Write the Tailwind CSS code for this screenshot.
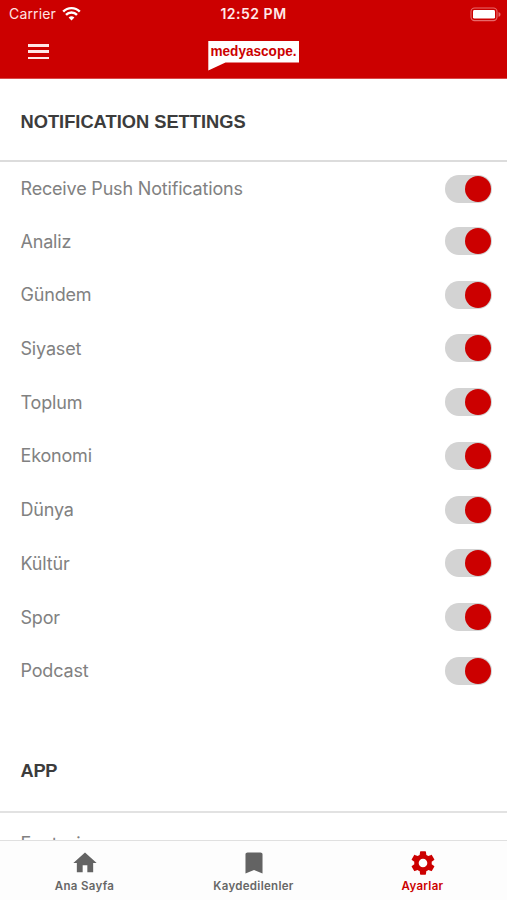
<!DOCTYPE html>
<html lang="tr">
<head>
  <meta charset="UTF-8" />
  <meta name="viewport" content="width=device-width, initial-scale=1.0" />
  <title>Medyascope - Ayarlar</title>
  <script src="https://cdn.jsdelivr.net/npm/@tailwindcss/browser@4"></script>
</head>
<body class="bg-white font-['Inter',sans-serif]">
  <div class="w-[507px] h-[900px] flex flex-col overflow-hidden">

    <header class="h-[79px] shrink-0 bg-[#cc0000] text-white border-b border-[#d94a4a]">
      <!-- Status bar -->
      <div class="h-[27px] grid grid-cols-3 items-center px-[9px]">
        <div class="flex items-center gap-[6px] text-[#ffe3e3]">
          <span class="text-[14px] leading-[26px] tracking-[0.15px]">Carrier</span>
          <svg class="w-[19px] h-[15px] -mt-[2px]" viewBox="0 0 19 15" fill="none" stroke="#fff" stroke-width="2.4">
            <path d="M1.2 5.6a11.6 11.6 0 0 1 16.6 0" />
            <path d="M4 8.9a7.6 7.6 0 0 1 11 0" />
            <path d="M9.5 14.6 6.6 11.6a4.1 4.1 0 0 1 5.8 0z" fill="#fff" stroke="none" />
          </svg>
        </div>
        <span class="text-center text-[14px] leading-[28px] font-semibold tracking-[0.5px] text-[#ffe9e9]">12:52 PM</span>
        <svg class="justify-self-end -mr-[3px] w-[31px] h-[15px]" viewBox="0 0 31 15">
          <rect x="1" y="1" width="26" height="12.6" rx="3.6" fill="none" stroke="#e86a6a" stroke-width="1.1" />
          <rect x="3" y="3" width="22" height="8.6" rx="1.4" fill="#fff" />
          <path d="M28.5 5v4.8c1.2-.4 2-1.3 2-2.4s-.8-2-2-2.4z" fill="#e86a6a" />
        </svg>
      </div>
      <!-- Nav bar -->
      <div class="h-[51px] grid grid-cols-3 items-start px-[28px]">
        <button class="mt-[17px] w-[21px] h-[15px] flex flex-col justify-between" aria-label="Menu">
          <span class="block w-full h-[2.5px] bg-[#ffe6e6]"></span>
          <span class="block w-full h-[2.5px] bg-[#ffe6e6]"></span>
          <span class="block w-full h-[2.5px] bg-[#ffe6e6]"></span>
        </button>
        <svg class="justify-self-center mt-[13px] w-[92px] h-[32px]" viewBox="0 0 92 32">
          <path d="M1.3 1h91v21.5h-73.8L1.3 30.6z" fill="#fff" />
          <text x="3.5" y="15.5" font-family="Liberation Sans, sans-serif" font-weight="700" font-size="14" textLength="86" lengthAdjust="spacingAndGlyphs" fill="#cc0000">medyascope.</text>
        </svg>
      </div>
    </header>

    <main class="flex-1 min-h-0 overflow-hidden text-[18px] text-[#818181]">
      <h2 class="h-[83px] pt-[4.8px] pl-[20.5px] flex items-center border-b-2 border-[#dcdcdc] font-['Liberation_Sans',sans-serif] font-bold text-[18.3px] text-[#3c3c3c]">NOTIFICATION SETTINGS</h2>

      <ul id="settings">
        <li class="h-[52.2px] pt-[1px] pl-[20.5px] pr-[15px] flex items-center justify-between">
          <span class="tracking-[-0.18px]">Receive Push Notifications</span>
          <span class="w-[47px] h-[28px] rounded-full bg-[#d3d3d3] flex items-center justify-end pr-[1px]"><span class="size-[26px] rounded-full bg-[#cc0000]"></span></span>
        </li>
      </ul>

      <h2 class="mt-[34.3px] h-[81px] pl-[20.5px] flex items-center border-b-2 border-[#e2e2e2] font-['Liberation_Sans',sans-serif] font-bold text-[18.2px] tracking-[-0.2px] text-[#3c3c3c]">APP</h2>
      <div class="h-[54px] pl-[20.5px] pt-[17px] leading-[27px] [word-spacing:4px]">Font size</div>
    </main>

    <!-- Tab bar -->
    <nav class="h-[60px] shrink-0 grid grid-cols-3 bg-[#fdfdfd] border-t border-[#e0e0e0] text-[11.5px] leading-[14px] font-semibold tracking-[0.3px] text-[#676767]">
      <a class="flex flex-col items-center pt-[8px]">
        <svg class="w-[28px] h-[28px]" viewBox="0 0 24 24" fill="#636363"><path d="M10 20v-6h4v6h5v-8h3L12 3 2 12h3v8z" /></svg>
        <span class="mt-[2px]">Ana Sayfa</span>
      </a>
      <a class="flex flex-col items-center pt-[8px]">
        <svg class="w-[28px] h-[28px]" viewBox="0 0 24 24" fill="#636363"><path d="M17.5 3h-11C5.500 3 4.700 3.600 4.700 4.500V21l7.300-3 7.300 3V4.500c0-.9-.8-1.500-1.800-1.500z" /></svg>
        <span class="mt-[2px]">Kaydedilenler</span>
      </a>
      <a class="flex flex-col items-center pt-[8px] text-[#cc0000]">
        <svg class="w-[28px] h-[28px]" viewBox="0 0 24 24" fill="#cc0000"><path d="M19.43 12.98c.04-.32.07-.64.07-.98s-.03-.66-.07-.98l2.11-1.65c.19-.15.24-.42.12-.64l-2-3.460c-.12-.22-.39-.3-.61-.22l-2.49 1c-.52-.4-1.080-.73-1.690-.98l-.38-2.650C14.460 2.180 14.250 2 14 2h-4c-.25 0-.46.18-.49.42l-.38 2.650c-.61.25-1.170.59-1.690.98l-2.490-1c-.23-.09-.49 0-.61.22l-2 3.460c-.13.22-.07.49.12.64l2.110 1.650c-.04.32-.07.65-.07.98s.03.66.07.98l-2.110 1.650c-.19.15-.24.42-.12.64l2 3.460c.12.22.39.3.61.22l2.490-1c.52.4 1.080.73 1.690.98l.38 2.650c.03.24.24.42.49.42h4c.25 0 .46-.18.49-.42l.38-2.650c.61-.25 1.170-.59 1.690-.98l2.490 1c.23.09.49 0 .61-.22l2-3.460c.12-.22.07-.49-.12-.64l-2.110-1.650zM12 15.700c-2.050 0-3.700-1.650-3.700-3.700s1.650-3.700 3.700-3.700 3.700 1.650 3.700 3.700-1.650 3.700-3.700 3.700z" /></svg>
        <span class="mt-[2px]">Ayarlar</span>
      </a>
    </nav>
  </div>

  <script>
    const categories = ['Analiz', 'Gündem', 'Siyaset', 'Toplum', 'Ekonomi', 'Dünya', 'Kültür', 'Spor', 'Podcast'];
    const list = document.getElementById('settings');
    categories.forEach((name) => {
      list.insertAdjacentHTML('beforeend', `
        <li class="h-[53.72px] pl-[20.5px] pr-[15px] flex items-center justify-between">
          <span class="tracking-[-0.18px]">${name}</span>
          <span class="w-[47px] h-[28px] rounded-full bg-[#d3d3d3] flex items-center justify-end pr-[1px]"><span class="size-[26px] rounded-full bg-[#cc0000]"></span></span>
        </li>`);
    });
  </script>
</body>
</html>
